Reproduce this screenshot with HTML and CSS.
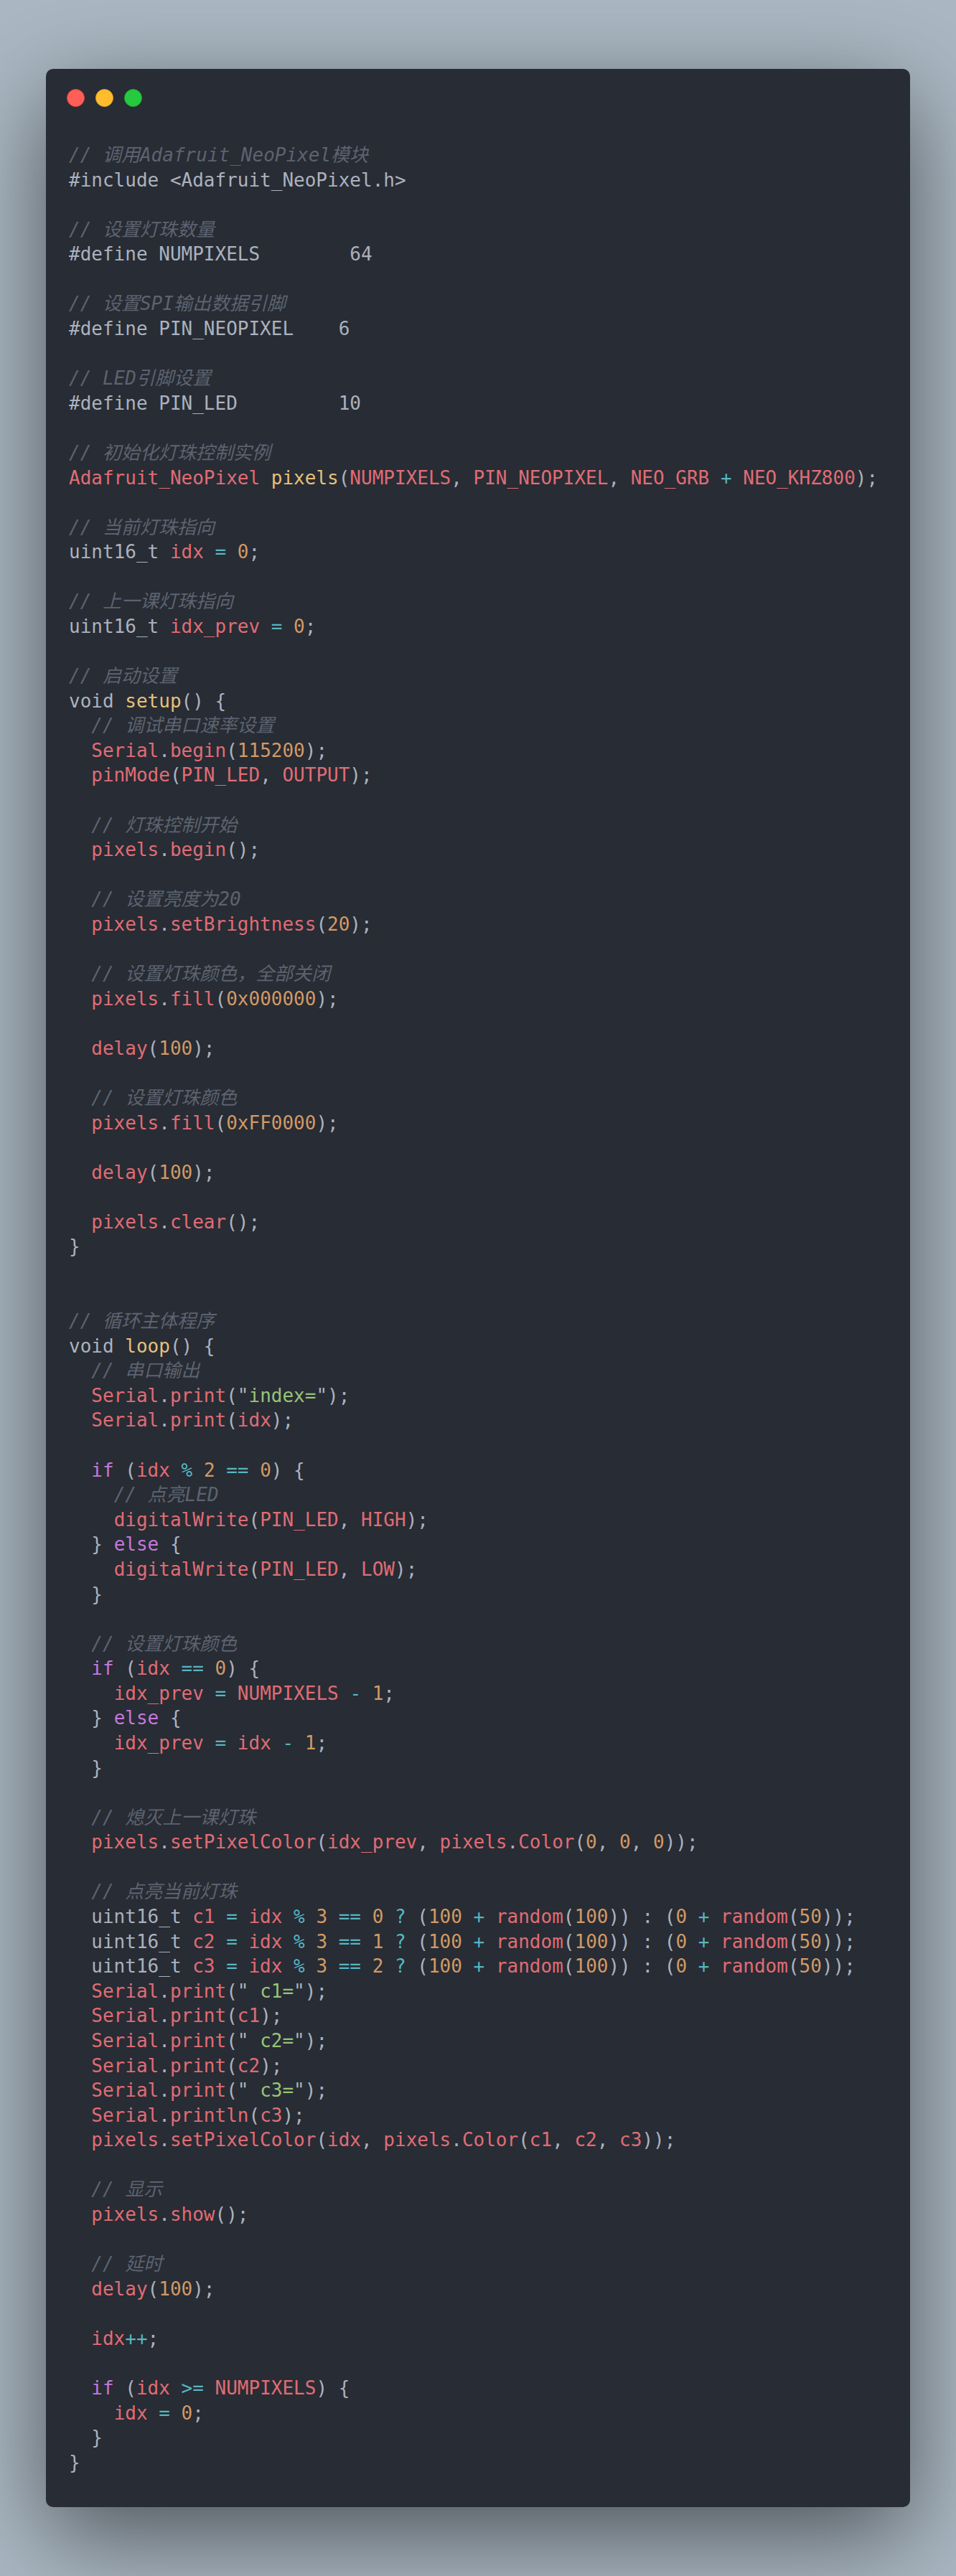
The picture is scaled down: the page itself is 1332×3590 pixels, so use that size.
FILE: index.html
```html
<!DOCTYPE html>
<html lang="zh">
<head>
<meta charset="utf-8">
<title>Adafruit NeoPixel</title>
<link rel="stylesheet" href="styles.css">
</head>
<body>
<div class="window">
  <div class="controls">
    <span class="dot red"></span>
    <span class="dot yellow"></span>
    <span class="dot green"></span>
  </div>
  <div class="code">
<div class="ln"><span class="c">// 调用Adafruit_NeoPixel模块</span></div>
<div class="ln">#include &lt;Adafruit_NeoPixel.h&gt;</div>
<div class="ln"></div>
<div class="ln"><span class="c">// 设置灯珠数量</span></div>
<div class="ln">#define NUMPIXELS        64</div>
<div class="ln"></div>
<div class="ln"><span class="c">// 设置SPI输出数据引脚</span></div>
<div class="ln">#define PIN_NEOPIXEL    6</div>
<div class="ln"></div>
<div class="ln"><span class="c">// LED引脚设置</span></div>
<div class="ln">#define PIN_LED         10</div>
<div class="ln"></div>
<div class="ln"><span class="c">// 初始化灯珠控制实例</span></div>
<div class="ln"><span class="f">Adafruit_NeoPixel</span> <span class="y">pixels</span>(<span class="f">NUMPIXELS</span>, <span class="f">PIN_NEOPIXEL</span>, <span class="f">NEO_GRB</span> <span class="o">+</span> <span class="f">NEO_KHZ800</span>);</div>
<div class="ln"></div>
<div class="ln"><span class="c">// 当前灯珠指向</span></div>
<div class="ln">uint16_t <span class="f">idx</span> <span class="o">=</span> <span class="n">0</span>;</div>
<div class="ln"></div>
<div class="ln"><span class="c">// 上一课灯珠指向</span></div>
<div class="ln">uint16_t <span class="f">idx_prev</span> <span class="o">=</span> <span class="n">0</span>;</div>
<div class="ln"></div>
<div class="ln"><span class="c">// 启动设置</span></div>
<div class="ln">void <span class="y">setup</span>() {</div>
<div class="ln">  <span class="c">// 调试串口速率设置</span></div>
<div class="ln">  <span class="f">Serial</span>.<span class="f">begin</span>(<span class="n">115200</span>);</div>
<div class="ln">  <span class="f">pinMode</span>(<span class="f">PIN_LED</span>, <span class="f">OUTPUT</span>);</div>
<div class="ln"></div>
<div class="ln">  <span class="c">// 灯珠控制开始</span></div>
<div class="ln">  <span class="f">pixels</span>.<span class="f">begin</span>();</div>
<div class="ln"></div>
<div class="ln">  <span class="c">// 设置亮度为20</span></div>
<div class="ln">  <span class="f">pixels</span>.<span class="f">setBrightness</span>(<span class="n">20</span>);</div>
<div class="ln"></div>
<div class="ln">  <span class="c">// 设置灯珠颜色，全部关闭</span></div>
<div class="ln">  <span class="f">pixels</span>.<span class="f">fill</span>(<span class="n">0x000000</span>);</div>
<div class="ln"></div>
<div class="ln">  <span class="f">delay</span>(<span class="n">100</span>);</div>
<div class="ln"></div>
<div class="ln">  <span class="c">// 设置灯珠颜色</span></div>
<div class="ln">  <span class="f">pixels</span>.<span class="f">fill</span>(<span class="n">0xFF0000</span>);</div>
<div class="ln"></div>
<div class="ln">  <span class="f">delay</span>(<span class="n">100</span>);</div>
<div class="ln"></div>
<div class="ln">  <span class="f">pixels</span>.<span class="f">clear</span>();</div>
<div class="ln">}</div>
<div class="ln"></div>
<div class="ln"></div>
<div class="ln"><span class="c">// 循环主体程序</span></div>
<div class="ln">void <span class="y">loop</span>() {</div>
<div class="ln">  <span class="c">// 串口输出</span></div>
<div class="ln">  <span class="f">Serial</span>.<span class="f">print</span>("<span class="s">index=</span>");</div>
<div class="ln">  <span class="f">Serial</span>.<span class="f">print</span>(<span class="f">idx</span>);</div>
<div class="ln"></div>
<div class="ln">  <span class="k">if</span> (<span class="f">idx</span> <span class="o">%</span> <span class="n">2</span> <span class="o">==</span> <span class="n">0</span>) {</div>
<div class="ln">    <span class="c">// 点亮LED</span></div>
<div class="ln">    <span class="f">digitalWrite</span>(<span class="f">PIN_LED</span>, <span class="f">HIGH</span>);</div>
<div class="ln">  } <span class="k">else</span> {</div>
<div class="ln">    <span class="f">digitalWrite</span>(<span class="f">PIN_LED</span>, <span class="f">LOW</span>);</div>
<div class="ln">  }</div>
<div class="ln"></div>
<div class="ln">  <span class="c">// 设置灯珠颜色</span></div>
<div class="ln">  <span class="k">if</span> (<span class="f">idx</span> <span class="o">==</span> <span class="n">0</span>) {</div>
<div class="ln">    <span class="f">idx_prev</span> <span class="o">=</span> <span class="f">NUMPIXELS</span> <span class="o">-</span> <span class="n">1</span>;</div>
<div class="ln">  } <span class="k">else</span> {</div>
<div class="ln">    <span class="f">idx_prev</span> <span class="o">=</span> <span class="f">idx</span> <span class="o">-</span> <span class="n">1</span>;</div>
<div class="ln">  }</div>
<div class="ln"></div>
<div class="ln">  <span class="c">// 熄灭上一课灯珠</span></div>
<div class="ln">  <span class="f">pixels</span>.<span class="f">setPixelColor</span>(<span class="f">idx_prev</span>, <span class="f">pixels</span>.<span class="f">Color</span>(<span class="n">0</span>, <span class="n">0</span>, <span class="n">0</span>));</div>
<div class="ln"></div>
<div class="ln">  <span class="c">// 点亮当前灯珠</span></div>
<div class="ln">  uint16_t <span class="f">c1</span> <span class="o">=</span> <span class="f">idx</span> <span class="o">%</span> <span class="n">3</span> <span class="o">==</span> <span class="n">0</span> <span class="o">?</span> (<span class="n">100</span> <span class="o">+</span> <span class="f">random</span>(<span class="n">100</span>)) : (<span class="n">0</span> <span class="o">+</span> <span class="f">random</span>(<span class="n">50</span>));</div>
<div class="ln">  uint16_t <span class="f">c2</span> <span class="o">=</span> <span class="f">idx</span> <span class="o">%</span> <span class="n">3</span> <span class="o">==</span> <span class="n">1</span> <span class="o">?</span> (<span class="n">100</span> <span class="o">+</span> <span class="f">random</span>(<span class="n">100</span>)) : (<span class="n">0</span> <span class="o">+</span> <span class="f">random</span>(<span class="n">50</span>));</div>
<div class="ln">  uint16_t <span class="f">c3</span> <span class="o">=</span> <span class="f">idx</span> <span class="o">%</span> <span class="n">3</span> <span class="o">==</span> <span class="n">2</span> <span class="o">?</span> (<span class="n">100</span> <span class="o">+</span> <span class="f">random</span>(<span class="n">100</span>)) : (<span class="n">0</span> <span class="o">+</span> <span class="f">random</span>(<span class="n">50</span>));</div>
<div class="ln">  <span class="f">Serial</span>.<span class="f">print</span>("<span class="s"> c1=</span>");</div>
<div class="ln">  <span class="f">Serial</span>.<span class="f">print</span>(<span class="f">c1</span>);</div>
<div class="ln">  <span class="f">Serial</span>.<span class="f">print</span>("<span class="s"> c2=</span>");</div>
<div class="ln">  <span class="f">Serial</span>.<span class="f">print</span>(<span class="f">c2</span>);</div>
<div class="ln">  <span class="f">Serial</span>.<span class="f">print</span>("<span class="s"> c3=</span>");</div>
<div class="ln">  <span class="f">Serial</span>.<span class="f">println</span>(<span class="f">c3</span>);</div>
<div class="ln">  <span class="f">pixels</span>.<span class="f">setPixelColor</span>(<span class="f">idx</span>, <span class="f">pixels</span>.<span class="f">Color</span>(<span class="f">c1</span>, <span class="f">c2</span>, <span class="f">c3</span>));</div>
<div class="ln"></div>
<div class="ln">  <span class="c">// 显示</span></div>
<div class="ln">  <span class="f">pixels</span>.<span class="f">show</span>();</div>
<div class="ln"></div>
<div class="ln">  <span class="c">// 延时</span></div>
<div class="ln">  <span class="f">delay</span>(<span class="n">100</span>);</div>
<div class="ln"></div>
<div class="ln">  <span class="f">idx</span><span class="o">++</span>;</div>
<div class="ln"></div>
<div class="ln">  <span class="k">if</span> (<span class="f">idx</span> <span class="o">&gt;=</span> <span class="f">NUMPIXELS</span>) {</div>
<div class="ln">    <span class="f">idx</span> <span class="o">=</span> <span class="n">0</span>;</div>
<div class="ln">  }</div>
<div class="ln">}</div>
  </div>
</div>
</body>
</html>
```

FILE: styles.css
```css
html, body {
  margin: 0;
  padding: 0;
}

body {
  background: #abb8c3;
  padding: 96px 64px;
  min-height: 3590px;
  box-sizing: border-box;
}

.window {
  background: #282c34;
  border-radius: 10px;
  box-shadow: 0 40px 136px rgba(0, 0, 0, 0.55);
  padding: 28px 32px 45px;
}

.controls {
  display: flex;
  gap: 15px;
  height: 25px;
  margin-left: -3px;
}

.dot {
  width: 25px;
  height: 25px;
  border-radius: 50%;
  box-sizing: border-box;
  display: block;
}

.red { background: #ff5f56; border: 1px solid #e0443e; }
.yellow { background: #ffbd2e; border: 1px solid #dea123; }
.green { background: #27c93f; border: 1px solid #1aab29; }

.code {
  margin-top: 50px;
  font-family: "DejaVu Sans Mono", "Noto Sans CJK SC", monospace;
  font-size: 26px;
  line-height: 34.58px;
  color: #abb2bf;
}

.ln {
  height: 34.58px;
  white-space: pre;
}

.c { color: #5c6370; font-style: italic; }
.k { color: #c678dd; }
.f { color: #e06c75; }
.y { color: #e5c07b; }
.n { color: #d19a66; }
.o { color: #56b6c2; }
.s { color: #98c379; }
```
